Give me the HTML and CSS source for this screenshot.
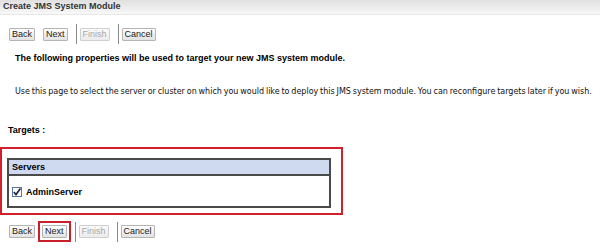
FILE: index.html
```html
<!DOCTYPE html>
<html>
<head>
  <title>Create JMS System Module</title>
  <link rel="stylesheet" href="styles.css">
</head>
<body>
  <div class="title">Create JMS System Module</div>

  <div class="buttons top-buttons">
    <button class="btn">Back</button>
    <button class="btn">Next</button>
    <span class="sep"></span>
    <button class="btn disabled">Finish</button>
    <span class="sep"></span>
    <button class="btn">Cancel</button>
  </div>

  <p class="intro">The following properties will be used to target your new JMS system module.</p>
  <p class="desc">Use this page to select the server or cluster on which you would like to deploy this JMS system module. You can reconfigure targets later if you wish.</p>

  <h4 class="targets-label">Targets :</h4>

  <div class="highlight">
    <table class="servers">
      <tr><th>Servers</th></tr>
      <tr>
        <td>
          <label class="server-row">
            <svg class="check" width="10" height="10" viewBox="0 0 10 10">
              <rect x="0.5" y="0.5" width="9" height="9" fill="#fff" stroke="#5a789e"/>
              <path d="M1.8 5 L4 7.6 L8.4 1.6" fill="none" stroke="#1a2a44" stroke-width="1.7"/>
            </svg>
            AdminServer
          </label>
        </td>
      </tr>
    </table>
  </div>

  <div class="buttons bottom-buttons">
    <button class="btn">Back</button>
    <span class="next-mark"><button class="btn">Next</button></span>
    <span class="sep"></span>
    <button class="btn disabled">Finish</button>
    <span class="sep"></span>
    <button class="btn">Cancel</button>
  </div>
</body>
</html>
```
FILE: styles.css
```css
body {
  margin: 0;
  font-family: "Liberation Sans", Arial, sans-serif;
  font-size: 10px;
  line-height: 12px;
  color: #000;
  background-color: #fff;
}

.title {
  height: 14px;
  line-height: 13px;
  padding-left: 3px;
  font-weight: bold;
  font-size: 9px;
  color: #333;
  background: linear-gradient(to bottom, #e0e0e0, #f8f8f8);
  border-bottom: 1px solid #e8e8e8;
}

.buttons {
  display: flex;
  align-items: center;
  padding-left: 9px;
}

.top-buttons {
  margin-top: 9px;
}

.bottom-buttons {
  margin-top: 6px;
}

.btn {
  font-family: "Liberation Sans", Arial, sans-serif;
  font-size: 9px;
  height: 13px;
  line-height: 11px;
  padding: 0 2px;
  margin-right: 8px;
  border: 1px solid #b4b4b4;
  border-radius: 1px;
  background: linear-gradient(to bottom, #ffffff, #e2e2e2);
  color: #222;
}

.btn.disabled {
  color: #a8a8a8;
  border-color: #cfcfcf;
  background: linear-gradient(to bottom, #fafafa, #ececec);
}

.sep {
  width: 1px;
  height: 20px;
  background-color: #8a8a8a;
  margin-right: 3px;
}

.next-mark {
  display: inline-flex;
  border: 2px solid #c8202c;
  padding: 2px;
  margin-left: -5px;
  margin-right: 4px;
}

.next-mark .btn {
  margin-right: 0;
}

.intro {
  margin: 8px 0 0 15px;
  font-weight: bold;
  font-size: 9px;
}

.desc {
  margin: 22px 0 0 15px;
  font-family: "DejaVu Sans", Verdana, sans-serif;
  font-size: 8px;
  word-spacing: -0.7px;
  white-space: nowrap;
  color: #111;
}

.targets-label {
  margin: 26px 0 0 8px;
  font-size: 9px;
}

.highlight {
  width: 329px;
  margin: 11px 0 0 0;
  padding: 9px 5px 5px 5px;
  border: 2px solid #d0202c;
}

.servers {
  width: 324px;
  border-collapse: collapse;
  border: 2px solid #4a4a4a;
}

.servers th {
  text-align: left;
  font-weight: bold;
  font-size: 9px;
  padding: 1px 3px;
  height: 12px;
  background-color: #cfdaf0;
  border-bottom: 2px solid #4a4a4a;
}

.servers td {
  padding: 10px 3px 8px 3px;
}

.server-row {
  display: flex;
  align-items: center;
  gap: 4px;
  font-weight: bold;
  font-size: 9px;
}
```
